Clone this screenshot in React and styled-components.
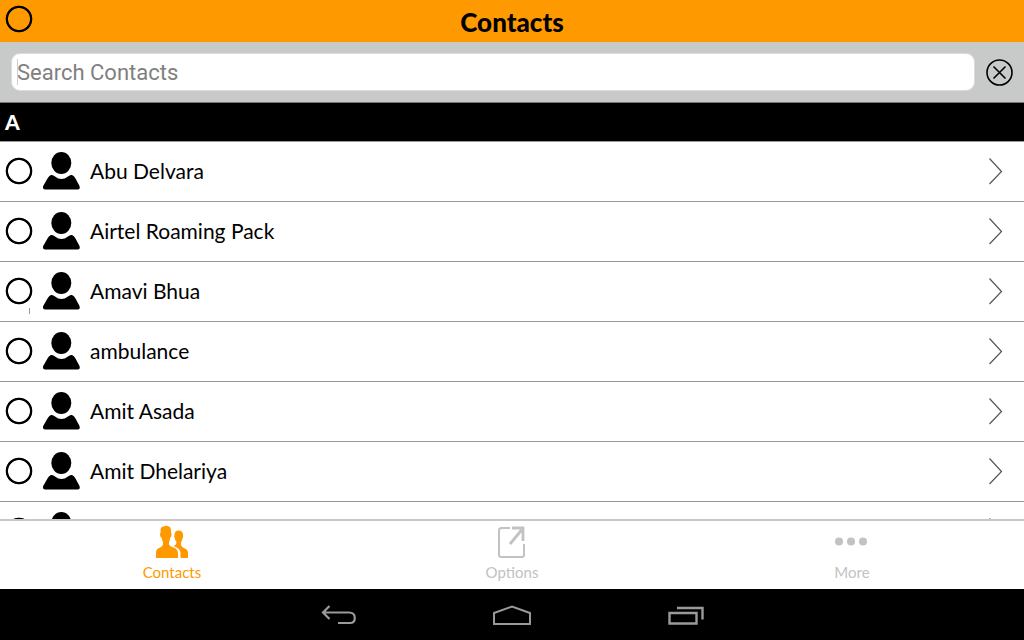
import React from "react";
import styled, { createGlobalStyle } from "styled-components";

const GlobalStyle = createGlobalStyle`
  *, *::before, *::after { box-sizing: border-box; }
  body { margin: 0; background: #fff; color: #000; font-family: Lato, "Liberation Sans", sans-serif; }
  button, input { font: inherit; margin: 0; }
`;

const Screen = styled.div`
  display: flex;
  flex-direction: column;
  height: 100vh;
`;

const Header = styled.header`
  display: grid;
  grid-template-columns: 1fr auto 1fr;
  align-items: center;
  height: 42px;
  flex: none;
  padding: 0 5px;
  background: #ff9900;
`;

const Title = styled.h1`
  margin: 0;
  padding-top: 2px;
  font-size: 26px;
  line-height: 32px;
  font-weight: 900;
`;

const Circle = styled.input.attrs({ type: "checkbox" })`
  appearance: none;
  flex: none;
  width: 28px;
  height: 28px;
  border-radius: 50%;
  background: radial-gradient(closest-side, transparent 75%, #000 81%, #000 92%, transparent 98%);
  margin-bottom: ${(p) => (p.$raised ? "4px" : "0")};

  &:checked { background: radial-gradient(closest-side, #000 92%, transparent 98%); }
`;

const SearchBar = styled.form`
  display: flex;
  align-items: center;
  gap: 11px;
  height: 61px;
  flex: none;
  padding: 0 11px;
  background: #c8caca;
  border-bottom: 1px solid #777;
`;

const SearchField = styled.label`
  position: relative;
  flex: 1;
  display: flex;

  &::before {
    content: "";
    position: absolute;
    left: 6px;
    top: 6px;
    width: 1px;
    height: 26px;
    background: #d0d0d0;
  }
`;

const SearchInput = styled.input`
  width: 100%;
  height: 38px;
  padding: 0 5px;
  border: 1px solid #dcdcdc;
  border-radius: 9px;
  background: #fff;
  font-family: Roboto, sans-serif;
  font-size: 22px;
  color: #222;
  outline: none;

  &::placeholder { color: #808080; opacity: 1; }
`;

const IconButton = styled.button`
  display: flex;
  flex: none;
  padding: 0;
  border: 0;
  background: none;
`;

const SectionHeading = styled.h2`
  flex: none;
  margin: 0;
  height: 38px;
  padding: 0 5px;
  background: #000;
  color: #fff;
  font-size: 21px;
  line-height: 38px;
  font-weight: 900;
`;

const List = styled.ul`
  flex: 1;
  min-height: 0;
  overflow: hidden;
  margin: 0;
  padding: 0;
  list-style: none;
`;

const Row = styled.li`
  position: relative;
  display: flex;
  align-items: center;
  height: 60px;
  padding: 0 21px 2px 5px;
  border-top: 1px solid #999;
`;

const PersonIcon = styled.svg`
  flex: none;
  width: 38px;
  height: 38px;
  margin-left: 9px;
`;

const Name = styled.span`
  flex: 1;
  padding-left: 10px;
  font-size: 21px;
  line-height: 28px;
`;

const Mark = styled.span`
  position: absolute;
  left: 29px;
  top: 46px;
  width: 1px;
  height: 6px;
  background: #999;
`;

const TabBar = styled.nav`
  display: flex;
  flex: none;
  height: 70px;
  padding: 0 2px;
  border-top: 2px solid #c8c8c8;
`;

const Tab = styled.button`
  flex: 1;
  display: flex;
  flex-direction: column;
  align-items: center;
  padding: 4px 0 0;
  border: 0;
  background: none;
  color: ${(p) => (p.$active ? "#ff9900" : "#c2c2c2")};
  font-size: 15px;
  line-height: 18px;
  gap: 4px;
`;

const SystemBar = styled.nav`
  display: flex;
  justify-content: center;
  flex: none;
  height: 51px;
  background: #000;
`;

const SystemButton = styled.button`
  display: flex;
  align-items: center;
  justify-content: center;
  width: 174px;
  padding: 2px 0 0;
  border: 0;
  background: none;
  color: #9a9a9a;
`;

const contacts = [
  { name: "Abu Delvara" },
  { name: "Airtel Roaming Pack" },
  { name: "Amavi Bhua", marked: true },
  { name: "ambulance" },
  { name: "Amit Asada" },
  { name: "Amit Dhelariya" },
  { name: "" },
];

function ContactRow({ name, marked }) {
  return (
    <Row>
      <Circle aria-label={name || "Select contact"} />
      {marked && <Mark />}
      <PersonIcon viewBox="0 0 38 38" aria-hidden="true">
        <ellipse cx="19.3" cy="11" rx="10" ry="11" />
        <path d="M9 23Q11 22.500 13 24.500Q19.300 29.500 26 24.500Q28 22.500 30 23Q32 23.500 33.500 26.500L37.500 34Q38.500 37.500 36 37.500H3Q.3 37.500 1.200 34L5.500 26.500Q7 23.500 9 23Z" />
      </PersonIcon>
      <Name>{name}</Name>
      <IconButton type="button" aria-label="Open contact">
        <svg width="14" height="28" viewBox="0 0 14 28" fill="none" stroke="#555" strokeWidth="1.2">
          <path d="M.5 1.500L12.500 14.500L.5 27" />
        </svg>
      </IconButton>
    </Row>
  );
}

function ContactsIcon() {
  return (
    <svg width="34" height="34" viewBox="0 0 34 34" fill="currentColor">
      <path d="M6 3Q7 1 9 1.500Q11 .3 13.500 1.300Q16.500 2 16 8Q17.200 8.500 16.300 11Q16 12.500 15 13Q15 16 14 17V19.500Q15 21.500 20 23Q22.800 24.500 23 27.500V33H1V27.500Q1 24 4 23Q7.500 21.500 8 19.500V17Q7 15.500 6.700 13Q5.300 12.500 5 10Q4.600 8.300 5.600 8Q5.200 5 6 3Z" />
      <path d="M19.500 9Q20 5.500 23.500 5.500Q28 5.500 28 10Q28.600 11 27.500 13.500Q27 16 26 17V20Q26.500 22 30 23.500Q33 24.500 33 28V33H25.500V28Q25.500 23.500 19.500 21.500L19 20.500Q21.500 20 21.500 17Q20 15.500 19.600 12.500Q18.700 11.500 19.500 10Z" />
    </svg>
  );
}

function OptionsIcon() {
  return (
    <svg width="34" height="34" viewBox="0 0 34 34" fill="none" stroke="currentColor" strokeWidth="2">
      <path d="M15 3H6.500Q4 3 4 5.500V30Q4 32 6.500 32H26.500Q29 32 29 30V19" />
      <path d="M17 3H29M28 2V16M15 19L27 4.500" strokeWidth="2.800" />
    </svg>
  );
}

function MoreIcon() {
  return (
    <svg width="34" height="34" viewBox="0 0 34 34" fill="currentColor">
      <circle cx="4" cy="16.5" r="4" />
      <circle cx="16" cy="16.5" r="4" />
      <circle cx="28" cy="16.5" r="4" />
    </svg>
  );
}

export default function App() {
  return (
    <>
      <GlobalStyle />
      <Screen>
        <Header>
          <Circle $raised aria-label="Select all" />
          <Title>Contacts</Title>
        </Header>
        <SearchBar>
          <SearchField>
            <SearchInput type="text" placeholder="Search Contacts" aria-label="Search Contacts" />
          </SearchField>
          <IconButton type="reset" aria-label="Clear search">
            <svg width="27" height="27" viewBox="0 0 27 27" fill="none" stroke="#000" strokeWidth="1.600">
              <circle cx="13.5" cy="13.5" r="12.5" />
              <path d="M7.500 7.500L19.500 19.500M19.500 7.500L7.500 19.500" />
            </svg>
          </IconButton>
        </SearchBar>
        <SectionHeading>A</SectionHeading>
        <List>
          {contacts.map((c) => (
            <ContactRow key={c.name} {...c} />
          ))}
        </List>
        <TabBar>
          <Tab type="button" $active><ContactsIcon />Contacts</Tab>
          <Tab type="button"><OptionsIcon />Options</Tab>
          <Tab type="button"><MoreIcon />More</Tab>
        </TabBar>
        <SystemBar>
          <SystemButton type="button" aria-label="Back">
            <svg width="36" height="22" viewBox="0 0 36 22" fill="none" stroke="currentColor" strokeWidth="2.200">
              <path d="M9.500 1L3 7.500L9.500 14M3 7.500H29Q34.800 7.500 34.800 13Q34.800 18 30 18H18" />
            </svg>
          </SystemButton>
          <SystemButton type="button" aria-label="Home">
            <svg width="38" height="22" viewBox="0 0 38 22" fill="none" stroke="currentColor" strokeWidth="2">
              <path d="M1 19V8L19 1.500L37 8V19Z" />
            </svg>
          </SystemButton>
          <SystemButton type="button" aria-label="Recent apps">
            <svg width="36" height="22" viewBox="0 0 36 22" fill="none" stroke="currentColor" strokeWidth="2.400">
              <path d="M1.500 8H28.500V18.500H1.500ZM9 3H34.500V14.500" />
            </svg>
          </SystemButton>
        </SystemBar>
      </Screen>
    </>
  );
}
